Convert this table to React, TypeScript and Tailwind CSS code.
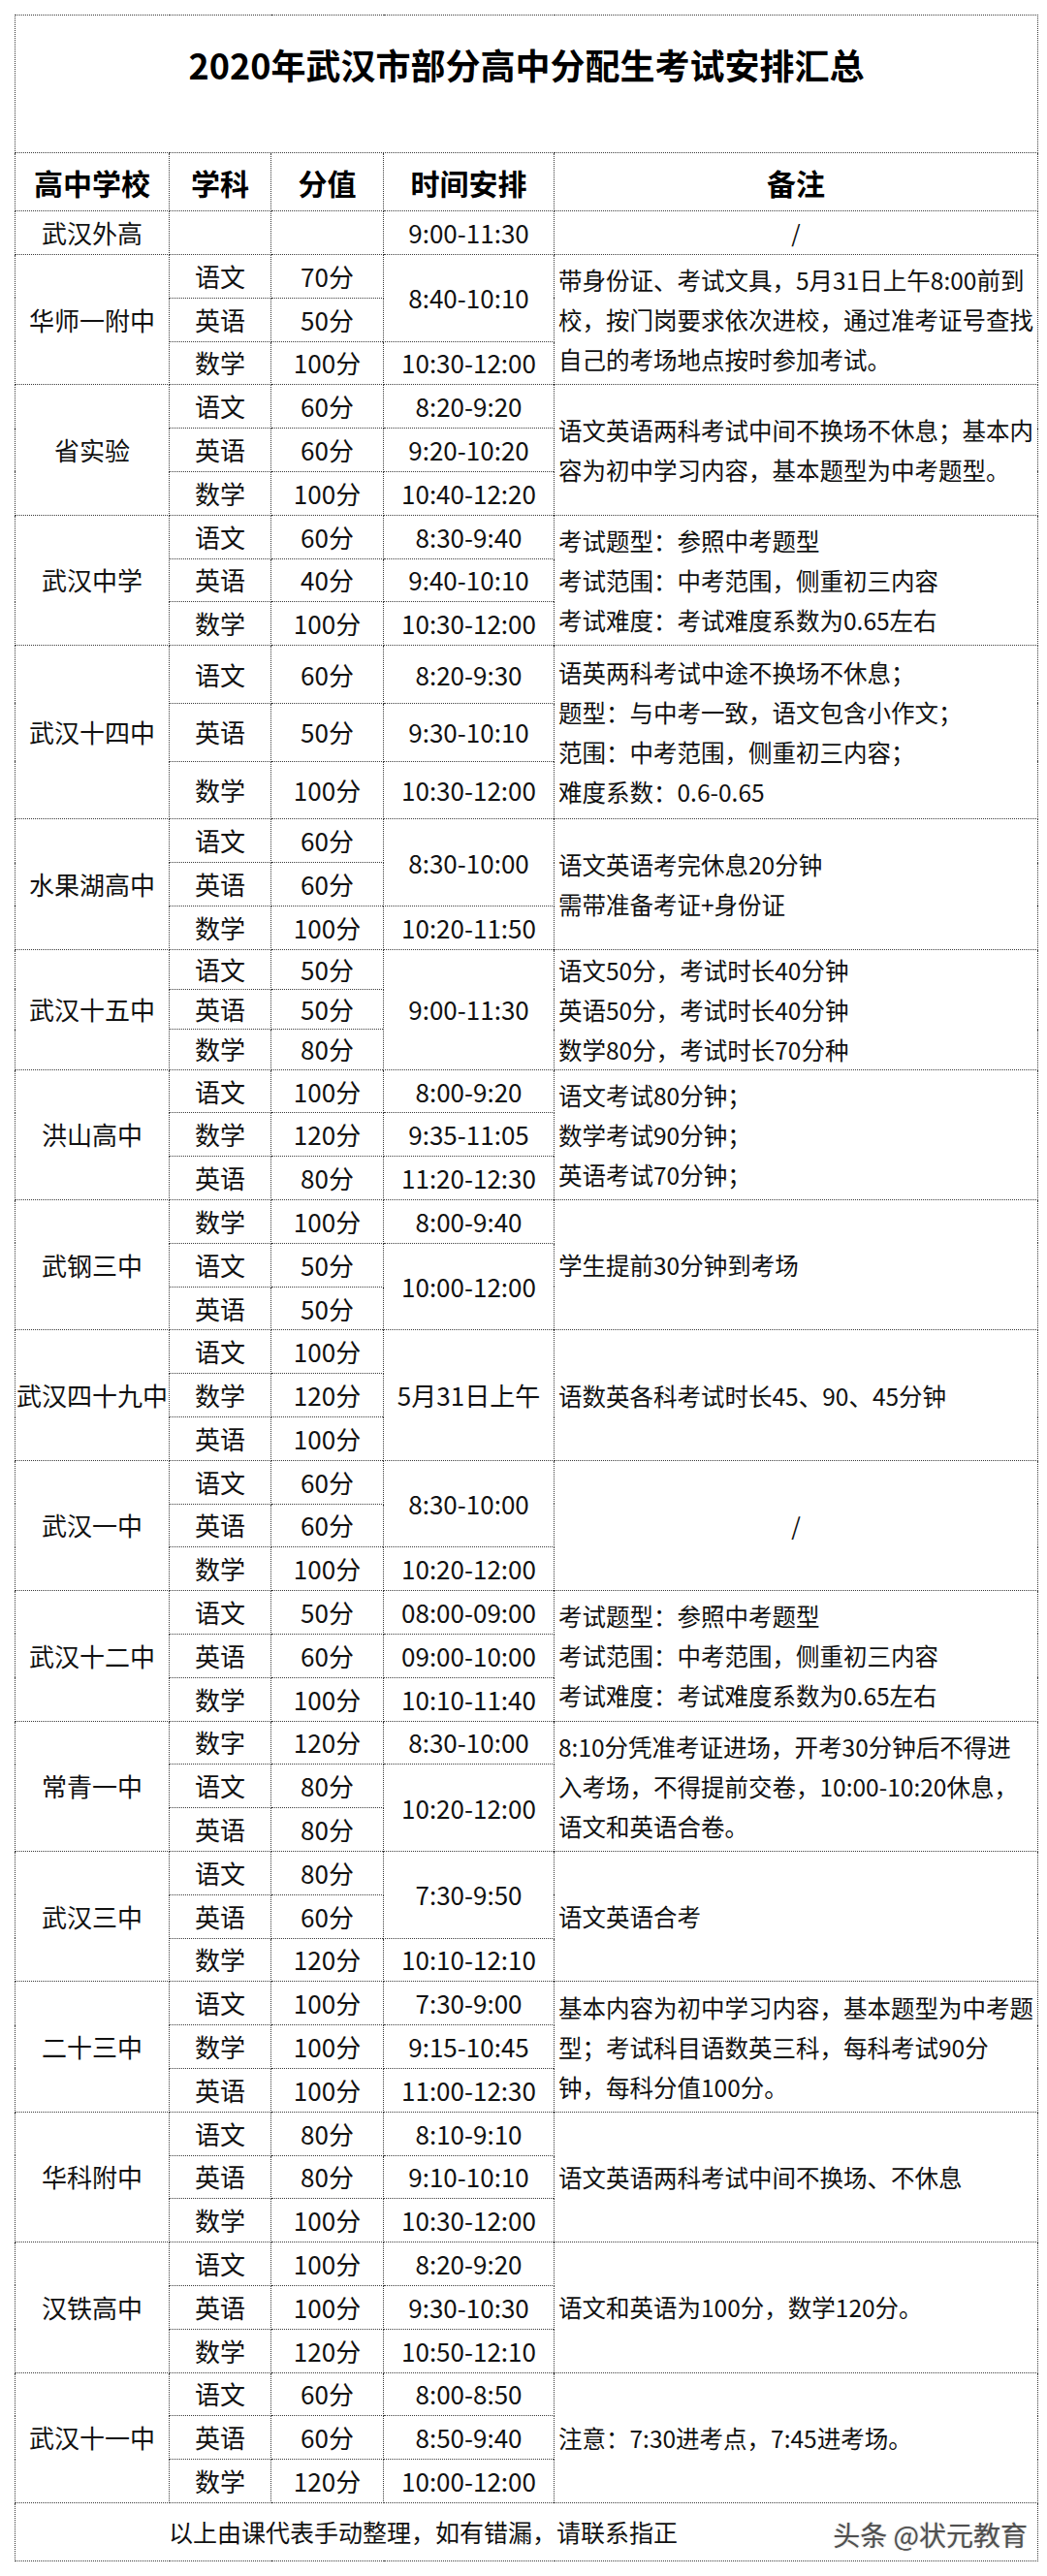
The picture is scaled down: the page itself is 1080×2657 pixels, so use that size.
type Row = { s: string; p: string; t?: string; ts?: number };
type Group = { name: string; rowH: string; rows: Row[]; notes: string[]; center?: boolean };

const groups: Group[] = [
  {
    name: "华师一附中",
    rowH: "h-[44.8px]",
    rows: [
      { s: "语文", p: "70分", t: "8:40-10:10", ts: 2 },
      { s: "英语", p: "50分" },
      { s: "数学", p: "100分", t: "10:30-12:00" },
    ],
    notes: [
      "带身份证、考试文具，5月31日上午8:00前到",
      "校，按门岗要求依次进校，通过准考证号查找",
      "自己的考场地点按时参加考试。",
    ],
  },
  {
    name: "省实验",
    rowH: "h-[44.8px]",
    rows: [
      { s: "语文", p: "60分", t: "8:20-9:20" },
      { s: "英语", p: "60分", t: "9:20-10:20" },
      { s: "数学", p: "100分", t: "10:40-12:20" },
    ],
    notes: ["语文英语两科考试中间不换场不休息；基本内", "容为初中学习内容，基本题型为中考题型。"],
  },
  {
    name: "武汉中学",
    rowH: "h-[44.8px]",
    rows: [
      { s: "语文", p: "60分", t: "8:30-9:40" },
      { s: "英语", p: "40分", t: "9:40-10:10" },
      { s: "数学", p: "100分", t: "10:30-12:00" },
    ],
    notes: ["考试题型：参照中考题型", "考试范围：中考范围，侧重初三内容", "考试难度：考试难度系数为0.65左右"],
  },
  {
    name: "武汉十四中",
    rowH: "h-[59.7px]",
    rows: [
      { s: "语文", p: "60分", t: "8:20-9:30" },
      { s: "英语", p: "50分", t: "9:30-10:10" },
      { s: "数学", p: "100分", t: "10:30-12:00" },
    ],
    notes: [
      "语英两科考试中途不换场不休息；",
      "题型：与中考一致，语文包含小作文；",
      "范围：中考范围，侧重初三内容；",
      "难度系数：0.6-0.65",
    ],
  },
  {
    name: "水果湖高中",
    rowH: "h-[44.8px]",
    rows: [
      { s: "语文", p: "60分", t: "8:30-10:00", ts: 2 },
      { s: "英语", p: "60分" },
      { s: "数学", p: "100分", t: "10:20-11:50" },
    ],
    notes: ["语文英语考完休息20分钟", "需带准备考证+身份证"],
  },
  {
    name: "武汉十五中",
    rowH: "h-[41.3px]",
    rows: [
      { s: "语文", p: "50分", t: "9:00-11:30", ts: 3 },
      { s: "英语", p: "50分" },
      { s: "数学", p: "80分" },
    ],
    notes: ["语文50分，考试时长40分钟", "英语50分，考试时长40分钟", "数学80分，考试时长70分种"],
  },
  {
    name: "洪山高中",
    rowH: "h-[44.8px]",
    rows: [
      { s: "语文", p: "100分", t: "8:00-9:20" },
      { s: "数学", p: "120分", t: "9:35-11:05" },
      { s: "英语", p: "80分", t: "11:20-12:30" },
    ],
    notes: ["语文考试80分钟；", "数学考试90分钟；", "英语考试70分钟；"],
  },
  {
    name: "武钢三中",
    rowH: "h-[44.8px]",
    rows: [
      { s: "数学", p: "100分", t: "8:00-9:40" },
      { s: "语文", p: "50分", t: "10:00-12:00", ts: 2 },
      { s: "英语", p: "50分" },
    ],
    notes: ["学生提前30分钟到考场"],
  },
  {
    name: "武汉四十九中",
    rowH: "h-[44.8px]",
    rows: [
      { s: "语文", p: "100分", t: "5月31日上午", ts: 3 },
      { s: "数学", p: "120分" },
      { s: "英语", p: "100分" },
    ],
    notes: ["语数英各科考试时长45、90、45分钟"],
  },
  {
    name: "武汉一中",
    rowH: "h-[44.8px]",
    rows: [
      { s: "语文", p: "60分", t: "8:30-10:00", ts: 2 },
      { s: "英语", p: "60分" },
      { s: "数学", p: "100分", t: "10:20-12:00" },
    ],
    notes: ["/"],
    center: true,
  },
  {
    name: "武汉十二中",
    rowH: "h-[44.8px]",
    rows: [
      { s: "语文", p: "50分", t: "08:00-09:00" },
      { s: "英语", p: "60分", t: "09:00-10:00" },
      { s: "数学", p: "100分", t: "10:10-11:40" },
    ],
    notes: ["考试题型：参照中考题型", "考试范围：中考范围，侧重初三内容", "考试难度：考试难度系数为0.65左右"],
  },
  {
    name: "常青一中",
    rowH: "h-[44.8px]",
    rows: [
      { s: "数字", p: "120分", t: "8:30-10:00" },
      { s: "语文", p: "80分", t: "10:20-12:00", ts: 2 },
      { s: "英语", p: "80分" },
    ],
    notes: [
      "8:10分凭准考证进场，开考30分钟后不得进",
      "入考场，不得提前交卷，10:00-10:20休息，",
      "语文和英语合卷。",
    ],
  },
  {
    name: "武汉三中",
    rowH: "h-[44.8px]",
    rows: [
      { s: "语文", p: "80分", t: "7:30-9:50", ts: 2 },
      { s: "英语", p: "60分" },
      { s: "数学", p: "120分", t: "10:10-12:10" },
    ],
    notes: ["语文英语合考"],
  },
  {
    name: "二十三中",
    rowH: "h-[44.8px]",
    rows: [
      { s: "语文", p: "100分", t: "7:30-9:00" },
      { s: "数学", p: "100分", t: "9:15-10:45" },
      { s: "英语", p: "100分", t: "11:00-12:30" },
    ],
    notes: [
      "基本内容为初中学习内容，基本题型为中考题",
      "型；考试科目语数英三科，每科考试90分",
      "钟，每科分值100分。",
    ],
  },
  {
    name: "华科附中",
    rowH: "h-[44.8px]",
    rows: [
      { s: "语文", p: "80分", t: "8:10-9:10" },
      { s: "英语", p: "80分", t: "9:10-10:10" },
      { s: "数学", p: "100分", t: "10:30-12:00" },
    ],
    notes: ["语文英语两科考试中间不换场、不休息"],
  },
  {
    name: "汉铁高中",
    rowH: "h-[44.8px]",
    rows: [
      { s: "语文", p: "100分", t: "8:20-9:20" },
      { s: "英语", p: "100分", t: "9:30-10:30" },
      { s: "数学", p: "120分", t: "10:50-12:10" },
    ],
    notes: ["语文和英语为100分，数学120分。"],
  },
  {
    name: "武汉十一中",
    rowH: "h-[44.8px]",
    rows: [
      { s: "语文", p: "60分", t: "8:00-8:50" },
      { s: "英语", p: "60分", t: "8:50-9:40" },
      { s: "数学", p: "120分", t: "10:00-12:00" },
    ],
    notes: ["注意：7:30进考点，7:45进考场。"],
  },
];

const cell = "border border-dotted border-[#3a3a3a] p-0 text-center align-middle";

function GroupRows({ g }: { g: Group }) {
  return (
    <>
      {g.rows.map((r, i) => (
        <tr key={i} className={g.rowH}>
          {i === 0 && (
            <td rowSpan={g.rows.length} className={cell}>
              {g.name}
            </td>
          )}
          <td className={cell}>{r.s}</td>
          <td className={cell}>{r.p}</td>
          {r.t && (
            <td rowSpan={r.ts ?? 1} className={cell}>
              {r.t}
            </td>
          )}
          {i === 0 && (
            <td
              rowSpan={g.rows.length}
              className={`${cell} text-[24.5px] leading-[41px] ${g.center ? "" : "!text-left pl-[4px]"}`}
            >
              {g.notes.map((n, k) => (
                <div key={k} className="whitespace-nowrap">
                  {n}
                </div>
              ))}
            </td>
          )}
        </tr>
      ))}
    </>
  );
}

export default function App() {
  return (
    <div
      className="min-h-[2657px] w-[1080px] bg-white pt-[15px] pl-[15px] text-[#111]"
      style={{ fontFamily: '"Noto Sans CJK SC", "Noto Sans", sans-serif' }}
    >
      <table className="w-[1055px] table-fixed border-collapse text-[26px] leading-none">
        <colgroup>
          <col className="w-[159px]" />
          <col className="w-[105px]" />
          <col className="w-[116px]" />
          <col className="w-[176px]" />
          <col className="w-[499px]" />
        </colgroup>
        <tbody>
          <tr className="h-[142px]">
            <td colSpan={5} className={`${cell} !align-top pt-[32px] text-[36px] font-bold text-black`}>
              2020年武汉市部分高中分配生考试安排汇总
            </td>
          </tr>
          <tr className="h-[60px] text-[30px] font-bold text-black">
            <td className={cell}>高中学校</td>
            <td className={cell}>学科</td>
            <td className={cell}>分值</td>
            <td className={cell}>时间安排</td>
            <td className={cell}>备注</td>
          </tr>
          <tr className="h-[45px]">
            <td className={cell}>武汉外高</td>
            <td className={cell}></td>
            <td className={cell}></td>
            <td className={cell}>9:00-11:30</td>
            <td className={`${cell} text-[24px]`}>/</td>
          </tr>
          {groups.map((g) => (
            <GroupRows key={g.name} g={g} />
          ))}
          <tr className="h-[60px]">
            <td colSpan={5} className={`${cell} relative !text-left pl-[158px] text-[25px]`}>
              以上由课代表手动整理，如有错漏，请联系指正
              <span className="absolute right-[10px] top-[18px] text-[28px] text-[#505050] [text-shadow:0_0_2px_#bbb]">
                头条 @状元教育
              </span>
            </td>
          </tr>
        </tbody>
      </table>
    </div>
  );
}
